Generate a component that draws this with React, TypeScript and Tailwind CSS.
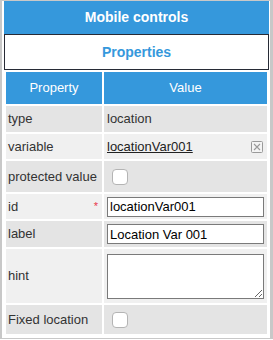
import React from "react";

// ── Small pieces ────────────────────────────────────────────────────────────

function FakeCheckbox() {
  return <div className="ml-[8px] h-[16px] w-[16px] rounded-[4px] border border-[#b4b4b4] bg-white" />;
}

function ClearIcon() {
  return (
    <svg width="12" height="12" viewBox="0 0 12 12" className="shrink-0">
      <rect x="0.5" y="0.5" width="11" height="11" rx="1" fill="#f4f4f4" stroke="#9a9a9a" />
      <path d="M3 3 L9 9 M9 3 L3 9" stroke="#9a9a9a" strokeWidth="1.1" />
    </svg>
  );
}

const rowDark = "bg-[#e4e4e4]";
const rowLight = "bg-[#f0f0f0]";

// ── Main ────────────────────────────────────────────────────────────────────

export default function App() {
  return (
    <div
      className="h-[339px] w-[273px] border-b border-l-2 border-r-[3px] border-t border-[#c8c8c8] bg-white pl-[2px] pr-[1px] text-[13px] text-[#333]"
      style={{ fontFamily: '"Liberation Sans", Arial, sans-serif' }}
    >
      {/* Title bar */}
      <div className="flex h-[34px] items-center justify-center border-b border-[#272b36] bg-[#3598dc] text-[14px] font-bold text-white">
        Mobile controls
      </div>

      {/* Section heading */}
      <div className="flex h-[35px] items-center justify-center border-x border-b border-[#272b36] bg-white text-[14px] font-bold text-[#3598dc]">
        Properties
      </div>

      <table className="w-full table-fixed border-separate border-spacing-[2px] bg-white">
        <colgroup>
          <col className="w-[96px]" />
          <col />
        </colgroup>
        <thead>
          <tr className="h-[32px] bg-[#3598dc] text-white">
            <th className="p-0 font-normal">Property</th>
            <th className="p-0 font-normal">Value</th>
          </tr>
        </thead>
        <tbody>
          <tr className={`h-[26px] ${rowDark}`}>
            <td className="px-[2px]">type</td>
            <td className="px-[3px]">location</td>
          </tr>
          <tr className={`h-[25px] ${rowLight}`}>
            <td className="px-[2px]">variable</td>
            <td className="px-[3px]">
              <div className="flex items-center justify-between pr-[1px]">
                <span className="text-[#222] underline">locationVar001</span>
                <ClearIcon />
              </div>
            </td>
          </tr>
          <tr className={`h-[31px] ${rowDark}`}>
            <td className="px-[2px]">protected value</td>
            <td className="px-0">
              <FakeCheckbox />
            </td>
          </tr>
          <tr className={`h-[25px] ${rowLight}`}>
            <td className="px-[2px]">
              <div className="flex items-center justify-between">
                <span>id</span>
                <span className="pr-[2px] text-[11px] text-[#e8364a]">*</span>
              </div>
            </td>
            <td className="px-[3px]">
              <input
                readOnly
                value="locationVar001"
                className="block h-[20px] w-full border border-[#7a7a7a] bg-white px-[2px] text-[13px] text-black outline-none"
              />
            </td>
          </tr>
          <tr className={`h-[26px] ${rowDark}`}>
            <td className="px-[2px]">label</td>
            <td className="px-[3px]">
              <input
                readOnly
                value="Location Var 001"
                className="block h-[20px] w-full border border-[#7a7a7a] bg-white px-[2px] text-[13px] text-black outline-none"
              />
            </td>
          </tr>
          <tr className={`h-[54px] ${rowLight}`}>
            <td className="px-[2px]">hint</td>
            <td className="px-[3px]">
              <textarea
                readOnly
                className="block h-[45px] w-full resize border border-[#7a7a7a] bg-white text-[13px] outline-none"
              />
            </td>
          </tr>
          <tr className={`h-[29px] ${rowDark}`}>
            <td className="px-[2px]">Fixed location</td>
            <td className="px-0">
              <FakeCheckbox />
            </td>
          </tr>
        </tbody>
      </table>
    </div>
  );
}
